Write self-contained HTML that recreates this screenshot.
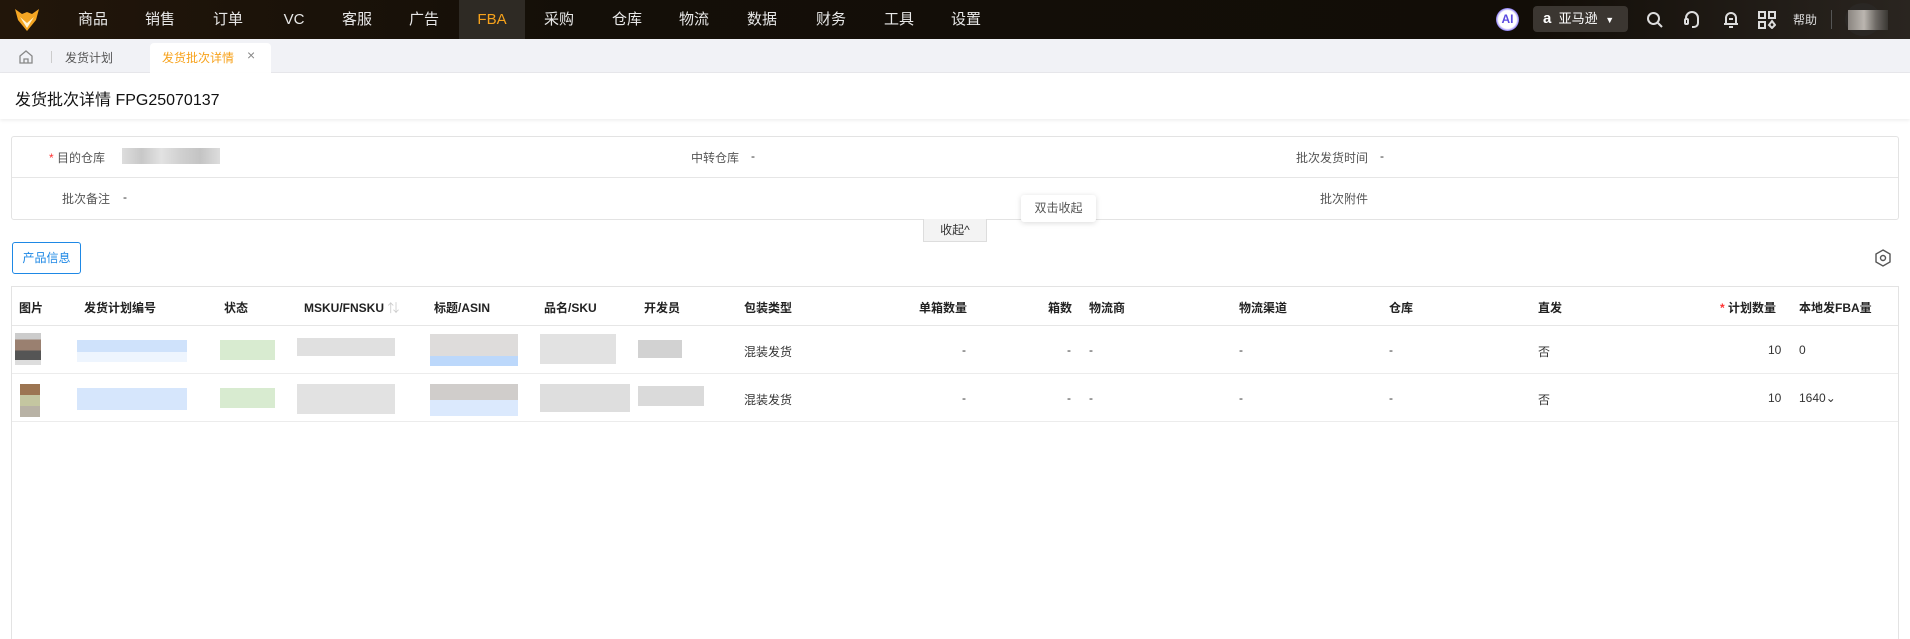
<!DOCTYPE html>
<html><head><meta charset="utf-8">
<style>
*{margin:0;padding:0;box-sizing:border-box}
html{width:1910px;height:639px;overflow:hidden}
body{width:1910px;height:639px;overflow:hidden;background:#fff;font-family:"Liberation Sans","Noto Sans CJK SC",sans-serif;color:#222;position:relative}
.a{position:absolute;white-space:nowrap}
.nav{position:absolute;left:0;top:0;width:1910px;height:39px;background:linear-gradient(90deg,#22160a 0%,#140f08 30%,#120d07 80%,#2a2520 100%)}
.nav .it{position:absolute;top:0;height:39px;line-height:39px;color:#e8e8e8;font-size:15px;transform:translateX(-50%)}
.tabs{position:absolute;left:0;top:39px;width:1910px;height:34px;background:#f1f2f6;border-bottom:1px solid #e6e7eb}
.h{font-size:12px;font-weight:bold;color:#222}
.c{font-size:12px;color:#333}
.lbl{font-size:12px;color:#555}
.b{position:absolute}
</style></head><body>
<div class="nav">
  <svg class="a" style="left:14px;top:8px" width="26" height="24" viewBox="0 0 26 24"><path d="M1 1 L8 6 L13 4 L18 6 L25 1 L22 12 L13 23 L4 12 Z" fill="#f5a623"/><path d="M6 9 L13 15 L20 9 L13 20 Z" fill="#fff3d0"/></svg>
  <div style="position:absolute;left:459px;top:0;width:66px;height:39px;background:#2e2a24"></div>
  <span class="it" style="left:93px">商品</span><span class="it" style="left:160px">销售</span><span class="it" style="left:228px">订单</span><span class="it" style="left:294px">VC</span><span class="it" style="left:357px">客服</span><span class="it" style="left:424px">广告</span><span class="it" style="left:492px;color:#f7a21b">FBA</span><span class="it" style="left:559px">采购</span><span class="it" style="left:627px">仓库</span><span class="it" style="left:694px">物流</span><span class="it" style="left:762px">数据</span><span class="it" style="left:831px">财务</span><span class="it" style="left:899px">工具</span><span class="it" style="left:966px">设置</span>
  <div class="a" style="left:1496px;top:8px;width:23px;height:23px;border-radius:50%;background:radial-gradient(circle,#fff 55%,#8b7cf6 70%,#5aa8f0 100%);color:#5b4be0;font-size:12px;font-weight:bold;text-align:center;line-height:23px">AI</div>
  <div class="a" style="left:1533px;top:6px;width:95px;height:26px;background:#3b3631;border-radius:4px;color:#fff;font-size:13px;line-height:26px;padding-left:10px"><b style="font-size:15px">a</b>&nbsp;&nbsp;亚马逊 <span style="font-size:9px;margin-left:4px">▼</span></div>
  <svg class="a" style="left:1646px;top:11px" width="18" height="18" viewBox="0 0 18 18" fill="none" stroke="#ddd" stroke-width="2"><circle cx="7.5" cy="7.5" r="5.5"/><path d="M12 12l4 4"/></svg>
  <svg class="a" style="left:1683px;top:10px" width="18" height="19" viewBox="0 0 18 19" fill="none" stroke="#ddd" stroke-width="2"><path d="M3 10V8a6 6 0 0112 0v2"/><rect x="2" y="9" width="3" height="5" rx="1"/><path d="M15 10v3a4 4 0 01-4 4H9"/></svg>
  <svg class="a" style="left:1722px;top:10px" width="18" height="19" viewBox="0 0 18 19" fill="none" stroke="#ddd" stroke-width="2"><path d="M4 14V8a5 5 0 0110 0v6zM2 14h14M7 17h4M7 9h4"/></svg>
  <svg class="a" style="left:1758px;top:11px" width="18" height="18" viewBox="0 0 18 18" fill="none" stroke="#ddd" stroke-width="2"><rect x="1" y="1" width="6" height="6"/><rect x="11" y="1" width="6" height="6"/><rect x="1" y="11" width="6" height="6"/><path d="M14 10l3 4-3 3-3-3z"/></svg>
  <span class="a" style="left:1793px;top:11px;color:#ddd;font-size:12px">帮助</span>
  <div class="a" style="left:1831px;top:10px;width:1px;height:19px;background:#555"></div>
  <div class="a" style="left:1845px;top:3px;width:36px;height:33px;border-radius:50%;background:#2a2724"></div>
  <div class="a" style="left:1848px;top:10px;width:40px;height:20px;background:linear-gradient(90deg,#8a8580,#bbb6b0 40%,#6d6964 70%,#3a3733)"></div>
</div>
<div class="tabs">
  <svg class="a" style="left:19px;top:11px" width="14" height="14" viewBox="0 0 14 14" fill="none" stroke="#888" stroke-width="1.3"><path d="M1 6L7 1l6 5v7H1z M5 13V9h4v4"/></svg>
  <div class="a" style="left:51px;top:12px;width:1px;height:12px;background:#ccc"></div>
  <span class="a" style="left:65px;top:10px;font-size:12px;color:#555">发货计划</span>
  <div class="a" style="left:150px;top:4px;width:121px;height:30px;background:#fff;border-radius:4px 4px 0 0"></div>
  <span class="a" style="left:162px;top:10px;font-size:12px;color:#f7a21b">发货批次详情</span>
  <span class="a" style="left:247px;top:8px;font-size:14px;color:#888">×</span>
</div>
<div class="a" style="left:0;top:73px;width:1910px;height:46px;box-shadow:0 2px 3px rgba(0,0,0,.06)"></div>
<span class="a" style="left:15px;top:86px;font-size:16px;color:#111">发货批次详情 FPG25070137</span>
<div class="a" style="left:11px;top:136px;width:1888px;height:84px;border:1px solid #e3e3e3;border-radius:3px"></div>
<div class="a" style="left:12px;top:177px;width:1886px;height:1px;background:#e6e6e6"></div>
<span class="a lbl" style="left:49px;top:149px"><span style="color:#f33">*</span> 目的仓库</span>
<div class="a" style="left:122px;top:148px;width:98px;height:16px;background:linear-gradient(90deg,#ddd,#c8c8c8 20%,#e2e2e2 40%,#d0d0d0 60%,#c4c4c4 80%,#ddd)"></div>
<span class="a lbl" style="left:691px;top:149px">中转仓库</span><span class="a c" style="left:751px;top:149px">-</span>
<span class="a lbl" style="left:1296px;top:149px">批次发货时间</span><span class="a c" style="left:1380px;top:149px">-</span>
<span class="a lbl" style="left:62px;top:190px">批次备注</span><span class="a c" style="left:123px;top:190px">-</span>
<span class="a lbl" style="left:1320px;top:190px">批次附件</span>
<div class="a" style="left:923px;top:219px;width:64px;height:23px;background:#f3f3f3;border:1px solid #ddd;border-top:none;font-size:12px;text-align:center;line-height:22px;color:#333">收起^</div>
<div class="a" style="left:1021px;top:195px;width:75px;height:27px;background:#fff;box-shadow:0 1px 6px rgba(0,0,0,.15);border-radius:3px;font-size:12px;color:#555;text-align:center;line-height:27px">双击收起</div>
<div class="a" style="left:12px;top:242px;width:69px;height:32px;border:1px solid #1e88e5;border-radius:3px;color:#1e88e5;font-size:12px;text-align:center;line-height:30px">产品信息</div>
<svg class="a" style="left:1874px;top:249px" width="18" height="18" viewBox="0 0 18 18" fill="none" stroke="#555" stroke-width="1.4"><path d="M9 1l7 4v8l-7 4-7-4V5z"/><circle cx="9" cy="9" r="2.5"/></svg>
<div class="a" style="left:11px;top:286px;width:1888px;height:353px;border:1px solid #e3e3e3;border-bottom:none"></div>
<div class="a" style="left:12px;top:325px;width:1886px;height:1px;background:#e6e6e6"></div>
<div class="a" style="left:12px;top:373px;width:1886px;height:1px;background:#ececec"></div>
<div class="a" style="left:12px;top:421px;width:1886px;height:1px;background:#ececec"></div>
<span class="a h" style="left:19px;top:299px">图片</span>
<span class="a h" style="left:84px;top:299px">发货计划编号</span>
<span class="a h" style="left:224px;top:299px">状态</span>
<span class="a h" style="left:304px;top:299px">MSKU/FNSKU <span style="color:#ccc;font-weight:normal">⇅</span></span>
<span class="a h" style="left:434px;top:299px">标题/ASIN</span>
<span class="a h" style="left:544px;top:299px">品名/SKU</span>
<span class="a h" style="left:644px;top:299px">开发员</span>
<span class="a h" style="left:744px;top:299px">包装类型</span>
<span class="a h" style="left:919px;top:299px">单箱数量</span>
<span class="a h" style="left:1048px;top:299px">箱数</span>
<span class="a h" style="left:1089px;top:299px">物流商</span>
<span class="a h" style="left:1239px;top:299px">物流渠道</span>
<span class="a h" style="left:1389px;top:299px">仓库</span>
<span class="a h" style="left:1538px;top:299px">直发</span>
<span class="a h" style="left:1720px;top:299px"><span style="color:#f33">*</span> 计划数量</span>
<span class="a h" style="left:1799px;top:299px">本地发FBA量</span>
<div class="b" style="left:15px;top:333px;width:26px;height:32px;background:linear-gradient(180deg,#ccc 0 20%,#9a8070 20% 55%,#555 55% 85%,#ddd 85%)"></div>
<div class="b" style="left:77px;top:340px;width:110px;height:12px;background:#cfe2fb"></div>
<div class="b" style="left:77px;top:352px;width:110px;height:10px;background:#eef5fe"></div>
<div class="b" style="left:220px;top:340px;width:55px;height:20px;background:#d8ebd0"></div>
<div class="b" style="left:297px;top:338px;width:98px;height:18px;background:#e0e0e0"></div>
<div class="b" style="left:430px;top:334px;width:88px;height:22px;background:#dedcdb"></div>
<div class="b" style="left:430px;top:356px;width:88px;height:10px;background:#bcd8fb"></div>
<div class="b" style="left:540px;top:334px;width:76px;height:30px;background:#e2e2e2"></div>
<div class="b" style="left:638px;top:340px;width:44px;height:18px;background:#d2d2d2"></div>
<div class="b" style="left:20px;top:384px;width:20px;height:33px;background:linear-gradient(180deg,#9c7552 0 33%,#c4c6a0 33% 66%,#b8b2a5 66%)"></div>
<div class="b" style="left:77px;top:388px;width:110px;height:22px;background:#d6e6fc"></div>
<div class="b" style="left:220px;top:388px;width:55px;height:20px;background:#d8ebd0"></div>
<div class="b" style="left:297px;top:384px;width:98px;height:30px;background:#e2e2e2"></div>
<div class="b" style="left:430px;top:384px;width:88px;height:16px;background:#d0cdcb"></div>
<div class="b" style="left:430px;top:400px;width:88px;height:16px;background:#dbe9fd"></div>
<div class="b" style="left:540px;top:384px;width:90px;height:28px;background:#dedede"></div>
<div class="b" style="left:638px;top:386px;width:66px;height:20px;background:#dadada"></div>
<span class="a c" style="left:744px;top:343px">混装发货</span>
<span class="a c" style="left:744px;top:391px">混装发货</span>
<span class="a c" style="left:962px;top:343px">-</span><span class="a c" style="left:962px;top:391px">-</span>
<span class="a c" style="left:1067px;top:343px">-</span><span class="a c" style="left:1067px;top:391px">-</span>
<span class="a c" style="left:1089px;top:343px">-</span><span class="a c" style="left:1089px;top:391px">-</span>
<span class="a c" style="left:1239px;top:343px">-</span><span class="a c" style="left:1239px;top:391px">-</span>
<span class="a c" style="left:1389px;top:343px">-</span><span class="a c" style="left:1389px;top:391px">-</span>
<span class="a c" style="left:1538px;top:343px">否</span><span class="a c" style="left:1538px;top:391px">否</span>
<span class="a c" style="left:1768px;top:343px">10</span><span class="a c" style="left:1768px;top:391px">10</span>
<span class="a c" style="left:1799px;top:343px">0</span><span class="a c" style="left:1799px;top:391px">1640⌄</span>
</body></html>
